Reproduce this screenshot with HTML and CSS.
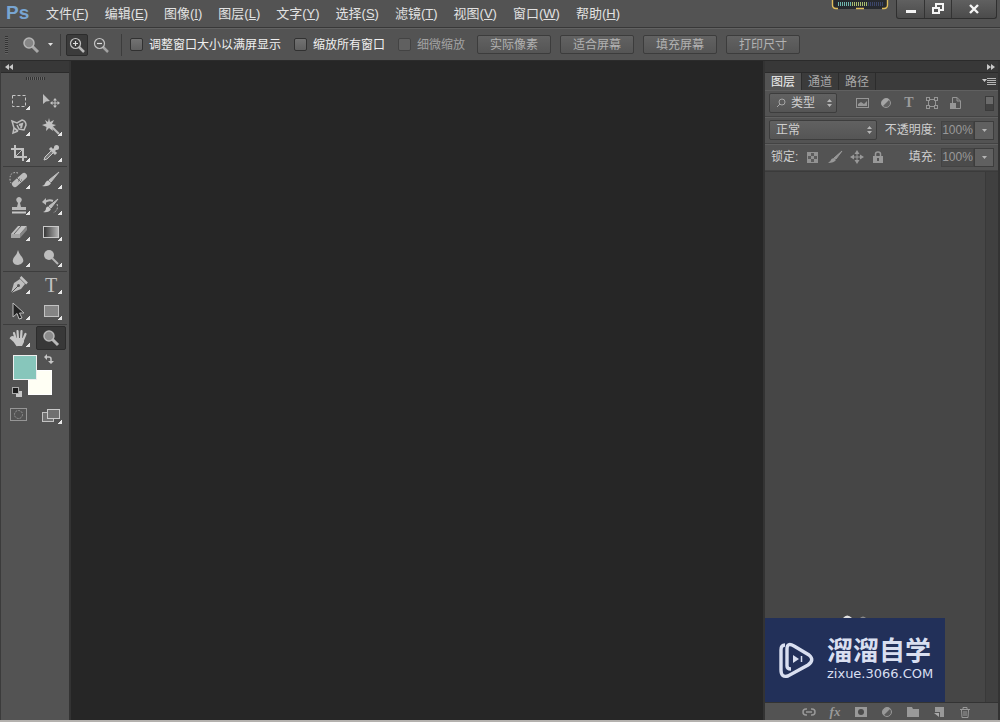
FILE: index.html
```html
<!DOCTYPE html>
<html lang="zh-CN">
<head>
<meta charset="utf-8">
<title>Ps</title>
<link rel="stylesheet" href="styles.css">
</head>
<body>
<header class="menubar">
  <span class="logo">Ps</span>
  <nav class="menus">
    <button>文件(<u>F</u>)</button>
    <button>编辑(<u>E</u>)</button>
    <button>图像(<u>I</u>)</button>
    <button>图层(<u>L</u>)</button>
    <button>文字(<u>Y</u>)</button>
    <button>选择(<u>S</u>)</button>
    <button>滤镜(<u>T</u>)</button>
    <button>视图(<u>V</u>)</button>
    <button>窗口(<u>W</u>)</button>
    <button>帮助(<u>H</u>)</button>
  </nav>
  <svg class="meter" width="58" height="11" viewBox="0 0 58 11" aria-hidden="true">
    <path d="M1 0V6Q1 9 4 9H54Q57 9 57 6V0Z" fill="#26292e"/>
    <path d="M7 4H21" stroke="#6fb5ae" stroke-width="4" stroke-dasharray="1 1"/>
    <path d="M21 4H37" stroke="#a9bd70" stroke-width="4" stroke-dasharray="1 1"/>
    <path d="M37 4H52" stroke="#3c4669" stroke-width="4" stroke-dasharray="1 1"/>
    <path d="M1.500 0V5Q1.500 8.500 5 8.500H7M56.500 0V5Q56.500 8.500 53 8.500H51M25 8.500H33" fill="none" stroke="#e0bd5c" stroke-width="1.400"/>
  </svg>
  <div class="window-controls">
    <button aria-label="最小化"><svg width="12" height="12" viewBox="0 0 12 12"><path d="M1 8.500H11" stroke="#f4f4f4" stroke-width="3"/></svg></button>
    <button aria-label="还原"><svg width="12" height="12" viewBox="0 0 12 12" fill="none" stroke="#f4f4f4" stroke-width="2"><path d="M4 4V1H11V7H8M1 5H7V10H1Z"/></svg></button>
    <button class="close" aria-label="关闭"><svg width="12" height="12" viewBox="0 0 12 12"><path d="M2 2L10 10M10 2L2 10" stroke="#f4f4f4" stroke-width="2.400"/></svg></button>
  </div>
</header>

<section class="options">
  <span class="grip"></span>
  <button class="preset" aria-label="缩放工具">
    <svg width="18" height="18" viewBox="0 0 18 18"><path d="M10 10L16 16" stroke="#a8a8a8" stroke-width="3"/><circle cx="7" cy="7" r="5" fill="#858585" stroke="#b5b5b5" stroke-width="1.500"/></svg>
    <svg width="5" height="3" viewBox="0 0 5 3"><path d="M0 0H5L2.500 3Z" fill="#e2e2e2"/></svg>
  </button>
  <div class="modes">
    <button class="mode on" aria-label="放大"><svg width="16" height="16" viewBox="0 0 16 16" fill="none"><path d="M10 10L15 15" stroke="#b8b8b8" stroke-width="2.500"/><circle cx="6.500" cy="6.500" r="5" stroke="#c2c2c2" stroke-width="1.200"/><path d="M4 6.500H9M6.500 4V9" stroke="#ddd" stroke-width="1.200"/></svg></button>
    <button class="mode" aria-label="缩小"><svg width="16" height="16" viewBox="0 0 16 16" fill="none"><path d="M10 10L15 15" stroke="#a2a2a2" stroke-width="2.500"/><circle cx="6.500" cy="6.500" r="5" stroke="#c2c2c2" stroke-width="1.200"/><path d="M4 6.500H9" stroke="#ddd" stroke-width="1.200"/></svg></button>
  </div>
  <div class="checks">
    <label><input type="checkbox">调整窗口大小以满屏显示</label>
    <label><input type="checkbox">缩放所有窗口</label>
    <label class="dim"><input type="checkbox" disabled>细微缩放</label>
  </div>
  <div class="actions">
    <button>实际像素</button>
    <button>适合屏幕</button>
    <button>填充屏幕</button>
    <button>打印尺寸</button>
  </div>
</section>

<main class="workspace">
  <aside class="toolbox">
    <button class="strip" aria-label="折叠工具栏"><svg width="8" height="6" viewBox="0 0 8 6"><path d="M4 0V6L0 3ZM8 0V6L4 3Z" fill="#c9c9c9"/></svg></button>
    <div class="handle"><span></span></div>
    <div class="tools">
      <button class="tool more" aria-label="选框"><svg width="20" height="20" viewBox="0 0 20 20"><rect x="3.500" y="4.500" width="13" height="11" fill="none" stroke="#c6c6c6" stroke-dasharray="3 2"/></svg></button>
      <button class="tool" aria-label="移动"><svg width="20" height="20" viewBox="0 0 20 20"><path d="M2 3V13L5 10.500L9 10Z" fill="#bcbcbc"/><path d="M10 12H18M14 8V16" stroke="#c2c2c2"/><path d="M14 7L16 9.500H12ZM14 17L16 14.500H12ZM9 12L11.500 10V14ZM19 12L16.500 10V14Z" fill="#c2c2c2"/></svg></button>
      <button class="tool more" aria-label="套索"><svg width="20" height="20" viewBox="0 0 20 20" fill="none" stroke="#bdbdbd" stroke-width="1.500"><path d="M9 14L4 16L5 11L3 4L8 6L13 3Q17 4 17 8L15 13L10 12L8 8"/><path d="M10 8L13 7L12 11M5 11L9 14" stroke-width="2"/></svg></button>
      <button class="tool more" aria-label="魔棒"><svg width="20" height="20" viewBox="0 0 20 20"><path d="M10 9L18 17" stroke="#b9b9b9" stroke-width="2.200"/><path d="M8 1L9 5L13 3L11 7L15 8L11 10L12 14L8 11L5 14L5.500 10L1 8L5.500 6.500L4 3L7 5Z" fill="#c2c2c2"/></svg></button>
      <button class="tool more" aria-label="裁剪"><svg width="20" height="20" viewBox="0 0 20 20" fill="none" stroke="#c2c2c2" stroke-width="2"><path d="M6 2V14H18M2 6H14V18"/><path d="M7 13L15 5" stroke-width="1"/></svg></button>
      <button class="tool more" aria-label="吸管"><svg width="20" height="20" viewBox="0 0 20 20"><path d="M3 17L4 14L11 7L13 9L6 16Z" fill="#777" stroke="#c9c9c9"/><path d="M9 5L15 11M12 8L16 4" stroke="#c2c2c2" stroke-width="3"/><circle cx="15.500" cy="4.500" r="2.500" fill="#c2c2c2"/></svg></button>
    </div>
    <div class="tools">
      <button class="tool more" aria-label="修复画笔"><svg width="20" height="20" viewBox="0 0 20 20"><path d="M9 3Q1 1 1 9Q1 14 5 15" fill="none" stroke="#c6c6c6" stroke-dasharray="1.500 1.500"/><path d="M6 14L15 6" stroke="#bcbcbc" stroke-width="6" stroke-linecap="round"/><path d="M8 8L13 13M10 9H11M12 10H13M9 11H10" stroke="#666"/></svg></button>
      <button class="tool more" aria-label="画笔"><svg width="20" height="20" viewBox="0 0 20 20"><path d="M18 2L10 12L8 10Z" fill="#bdbdbd" stroke="#bdbdbd"/><path d="M7.500 10.500L10 13Q8 17 1 16Q4 15 4.500 12.500Q6 10 7.500 10.500Z" fill="#c9c9c9"/></svg></button>
      <button class="tool more" aria-label="仿制图章"><svg width="20" height="20" viewBox="0 0 20 20"><path d="M3 11H8L9 7Q6 4 8 2Q10 0 12 2Q14 4 11 7L12 11H17V14H3Z" fill="#b9b9b9"/><path d="M3 16.500H17" stroke="#c6c6c6" stroke-width="2"/></svg></button>
      <button class="tool more" aria-label="历史记录画笔"><svg width="20" height="20" viewBox="0 0 20 20"><path d="M17 3L10 12L8 10Z" fill="#bdbdbd" stroke="#bdbdbd"/><path d="M7.500 10.500L10 13Q8 17 2 16Q5 15 5 12Q6 10 7.500 10.500Z" fill="#c9c9c9"/><path d="M4 6Q8 3 12 5" fill="none" stroke="#bdbdbd" stroke-width="2"/><path d="M5 2V9L1 6Z" fill="#bdbdbd"/><path d="M16 8Q18 14 12 17" fill="none" stroke="#bdbdbd" stroke-dasharray="2 1.500"/></svg></button>
      <button class="tool more" aria-label="橡皮擦"><svg width="20" height="20" viewBox="0 0 20 20"><path d="M2 12L9 4H18L11 12Z" fill="#c2c2c2"/><path d="M2 12H11V16H2Z" fill="#a6a6a6"/><path d="M11 12L18 4V8L11 16Z" fill="#858585"/><path d="M5 12L12 4" fill="none" stroke="#626262"/></svg></button>
      <button class="tool more" aria-label="渐变"><svg width="20" height="20" viewBox="0 0 20 20"><defs><linearGradient id="fade"><stop stop-color="#333"/><stop offset="1" stop-color="#b5b5b5"/></linearGradient></defs><rect x="2.500" y="4.500" width="15" height="11" fill="url(#fade)" stroke="#c9c9c9"/></svg></button>
      <button class="tool more" aria-label="模糊"><svg width="20" height="20" viewBox="0 0 20 20"><path d="M9 2Q10 6 13 9Q15 12 14 14Q12 17 9 17Q5 17 4 14Q3 11 6 8Q8 6 9 2Z" fill="#bdbdbd"/></svg></button>
      <button class="tool more" aria-label="减淡"><svg width="20" height="20" viewBox="0 0 20 20"><circle cx="8" cy="7" r="5" fill="#bdbdbd"/><path d="M11 10L17 16" stroke="#b5b5b5" stroke-width="2"/></svg></button>
    </div>
    <div class="tools">
      <button class="tool more" aria-label="钢笔"><svg width="20" height="20" viewBox="0 0 20 20"><path d="M2 18L5 8L11 4L16 9L12 14Z" fill="#bdbdbd"/><path d="M2 18L9 11" stroke="#555"/><circle cx="9.500" cy="10.500" r="1.500" fill="#555"/><path d="M11.500 2L18 8.500" stroke="#c2c2c2" stroke-width="2.500"/></svg></button>
      <button class="tool more type" aria-label="文字">T</button>
      <button class="tool more" aria-label="路径选择"><svg width="20" height="20" viewBox="0 0 20 20"><path d="M4 2V16L8 12.500L10 18L13 17L10.500 12H15Z" fill="#222" stroke="#bdbdbd"/></svg></button>
      <button class="tool more" aria-label="矩形"><svg width="20" height="20" viewBox="0 0 20 20"><rect x="3.500" y="4.500" width="14" height="11" fill="#858585" stroke="#c2c2c2"/></svg></button>
    </div>
    <div class="tools">
      <button class="tool more" aria-label="抓手"><svg width="20" height="20" viewBox="0 0 20 20"><path d="M8 17Q5 12 2 10Q3 8 5 10L7 12M7 12L5 5M9 11L8.500 3M12 11L12.500 3M14 12L16.500 6" fill="none" stroke="#c6c6c6" stroke-width="2.200" stroke-linecap="round"/><path d="M6 10H15V14L13 18H8L5 12Z" fill="#c6c6c6"/></svg></button>
      <button class="tool on" aria-label="缩放"><svg width="20" height="20" viewBox="0 0 20 20"><path d="M11 11L17 17" stroke="#b9b9b9" stroke-width="3"/><circle cx="8" cy="8" r="5" fill="#8b8b8b" stroke="#b9b9b9" stroke-width="1.500"/></svg></button>
    </div>
    <div class="swatches">
      <button class="swatch back" aria-label="背景色"></button>
      <button class="swatch front" aria-label="前景色"></button>
      <button class="swap" aria-label="切换颜色"><svg width="10" height="10" viewBox="0 0 10 10"><path d="M2 3H5Q7 3 7 5V8" fill="none" stroke="#c6c6c6" stroke-width="1.500"/><path d="M3 0V6L0 3ZM4 7H10L7 10Z" fill="#c6c6c6"/></svg></button>
      <button class="reset" aria-label="默认颜色"><svg width="10" height="10" viewBox="0 0 10 10"><rect x="4" y="4" width="6" height="6" fill="#c6c6c6"/><rect x=".5" y=".5" width="6" height="6" fill="#1c1c1c" stroke="#aaa"/></svg></button>
    </div>
    <div class="tools plain">
      <button class="tool" aria-label="快速蒙版"><svg width="20" height="20" viewBox="0 0 20 20" fill="none" stroke="#969696"><rect x="1.500" y="3.500" width="16" height="12"/><circle cx="9.500" cy="9.500" r="4" stroke-dasharray="2 1"/></svg></button>
      <button class="tool more" aria-label="屏幕模式"><svg width="20" height="20" viewBox="0 0 20 20"><rect x="1.500" y="7.500" width="11" height="9" fill="#707070" stroke="#c2c2c2"/><rect x="6.500" y="4.500" width="12" height="9" fill="#707070" stroke="#c9c9c9"/></svg></button>
    </div>
  </aside>

  <div class="canvas"></div>

  <aside class="panel">
    <button class="strip right" aria-label="折叠面板"><svg width="8" height="6" viewBox="0 0 8 6"><path d="M0 0V6L4 3ZM4 0V6L8 3Z" fill="#c9c9c9"/></svg></button>
    <div class="tabs">
      <button class="tab on">图层</button>
      <button class="tab">通道</button>
      <button class="tab">路径</button>
      <button class="panel-menu" aria-label="面板菜单"><svg width="14" height="9" viewBox="0 0 14 9"><path d="M0 2H5L2.500 5Z" fill="#c9c9c9"/><path d="M5 1.500H14M5 3.500H14M5 5.500H14M5 7.500H14" stroke="#b5b5b5"/></svg></button>
    </div>
    <div class="row">
      <div class="picker kind">
        <svg width="10" height="10" viewBox="0 0 10 10" fill="none" stroke="#a5a5a5"><circle cx="6" cy="4" r="3"/><path d="M4 6L1 9"/></svg>
        <select aria-label="筛选类型"><option>类型</option></select>
        <svg width="5" height="8" viewBox="0 0 5 8"><path d="M0 3H5L2.500 0ZM0 5H5L2.500 8Z" fill="#b5b5b5"/></svg>
      </div>
      <div class="filters">
        <button aria-label="像素图层"><svg width="14" height="14" viewBox="0 0 14 14"><rect x=".5" y="2.500" width="12" height="9" fill="none" stroke="#969696"/><path d="M2 10V8L5 6L8 8L11 5V10Z" fill="#969696"/></svg></button>
        <button aria-label="调整图层"><svg width="14" height="14" viewBox="0 0 14 14"><circle cx="7" cy="7" r="4.500" fill="#626262" stroke="#969696"/><path d="M10.500 3.500L3.500 10.500A5 5 0 0 1 10.500 3.500Z" fill="#a5a5a5"/></svg></button>
        <button class="serif" aria-label="文字图层">T</button>
        <button aria-label="形状图层"><svg width="14" height="14" viewBox="0 0 14 14"><rect x="3.500" y="3.500" width="7" height="7" fill="none" stroke="#969696"/><path d="M1 1H5V5H1ZM9 1H13V5H9ZM1 9H5V13H1ZM9 9H13V13H9Z" fill="#969696"/><path d="M2 2H4V4H2ZM10 2H12V4H10ZM2 10H4V12H2ZM10 10H12V12H10Z" fill="#535353"/></svg></button>
        <button aria-label="智能对象"><svg width="14" height="14" viewBox="0 0 14 14"><path d="M4.500 7V1.500H9L12.500 5V12.500H8M9 1.500V5H12.500" fill="none" stroke="#969696"/><rect x="2" y="7" width="6" height="6" fill="#969696"/></svg></button>
      </div>
      <button class="toggle" aria-label="图层过滤开关"></button>
    </div>
    <div class="row">
      <div class="picker blend">
        <select aria-label="混合模式"><option>正常</option></select>
        <svg width="5" height="8" viewBox="0 0 5 8"><path d="M0 3H5L2.500 0ZM0 5H5L2.500 8Z" fill="#b5b5b5"/></svg>
      </div>
      <div class="amount"><label for="opacity">不透明度:</label><input id="opacity" type="text" value="100%"><button aria-label="不透明度选项"><svg width="5" height="3" viewBox="0 0 5 3"><path d="M0 0H5L2.500 3Z" fill="#b5b5b5"/></svg></button></div>
    </div>
    <div class="row">
      <span class="lock-label">锁定:</span>
      <div class="locks">
        <button aria-label="锁定透明像素"><svg width="14" height="14" viewBox="0 0 14 14"><rect x="1" y="2" width="11" height="11" fill="#929292"/><path d="M5 3H8V6H5ZM2 6H5V9H2ZM8 6H11V9H8ZM5 9H8V12H5Z" fill="#5c5c5c"/></svg></button>
        <button aria-label="锁定图像像素"><svg width="16" height="14" viewBox="0 0 16 14"><path d="M15 1L9 9L7 8Z" fill="#999" stroke="#999"/><path d="M6.500 8L9 10Q7 13 1 13Q4 11 4.500 9Z" fill="#999"/></svg></button>
        <button aria-label="锁定位置"><svg width="14" height="14" viewBox="0 0 14 14"><path d="M3 7H11M7 3V11" stroke="#999"/><path d="M7 0L9.500 4H4.500ZM7 14L9.500 10H4.500ZM0 7L4 4.500V9.500ZM14 7L10 4.500V9.500Z" fill="#999"/></svg></button>
        <button aria-label="锁定全部"><svg width="14" height="14" viewBox="0 0 14 14"><path d="M4.500 7V4Q4.500 2 7 2Q9.500 2 9.500 4V7" fill="none" stroke="#999" stroke-width="1.500"/><path d="M2 6H12V13H2ZM6 8V11H8V8Z" fill="#999" fill-rule="evenodd"/></svg></button>
      </div>
      <div class="amount"><label for="fill">填充:</label><input id="fill" type="text" value="100%"><button aria-label="填充选项"><svg width="5" height="3" viewBox="0 0 5 3"><path d="M0 0H5L2.500 3Z" fill="#b5b5b5"/></svg></button></div>
    </div>
    <div class="layers">
      <div class="track"></div>
      <div class="brand-area">
        <svg class="bubbles" width="28" height="3" viewBox="0 0 28 3"><path d="M0 3Q4 -2 9 3Z" fill="#e2e2e2"/><path d="M17 3Q20 0 23 3Z" fill="#8b8b8b"/></svg>
        <div class="brand">
          <svg width="36" height="38" viewBox="0 0 36 38" fill="none" stroke="#d9dff0" stroke-width="3.400"><path d="M6 4Q2 4 2 9V29Q2 37 9 35L29 24Q36 19 30 14L15 5Q8 1 8 8V25Q8 28 12 28"/><path d="M14 14V22L20 18Z" fill="#d9dff0" stroke="none"/><path d="M22.500 15V21" stroke-width="1.500"/></svg>
          <div class="brand-text"><strong>溜溜自学</strong><span>zixue.3066.COM</span></div>
        </div>
      </div>
    </div>
    <div class="footer">
      <button aria-label="链接图层"><svg width="14" height="12" viewBox="0 0 14 12" fill="none" stroke="#999" stroke-width="1.500"><path d="M5 9H4Q1 9 1 6Q1 3 4 3H5M9 3H10Q13 3 13 6Q13 9 10 9H9M4 6H10"/></svg></button>
      <button class="fx" aria-label="图层样式">fx</button>
      <button aria-label="添加蒙版"><svg width="14" height="12" viewBox="0 0 14 12"><rect x="1" y="1" width="12" height="10" fill="#999"/><circle cx="7" cy="6" r="3" fill="#4c4c4c"/></svg></button>
      <button aria-label="新建调整图层"><svg width="14" height="12" viewBox="0 0 14 12"><circle cx="7" cy="6" r="4.500" fill="#5b5b5b" stroke="#999"/><path d="M10.500 2.500L3.500 9.500A5 5 0 0 1 10.500 2.500Z" fill="#999"/></svg></button>
      <button aria-label="新建组"><svg width="14" height="12" viewBox="0 0 14 12"><path d="M1 1H6L7 3H13V11H1Z" fill="#999"/></svg></button>
      <button aria-label="新建图层"><svg width="14" height="12" viewBox="0 0 14 12"><path d="M3 1H12V11H8V6H3Z" fill="#999"/><path d="M2 7H7V11Z" fill="#aaa"/></svg></button>
      <button aria-label="删除图层"><svg width="14" height="12" viewBox="0 0 14 12" fill="none" stroke="#999"><path d="M2 3.500H12M5 3V1.500H9V3M3.500 4L4 11.500H10L10.500 4M6 5V10M8 5V10"/></svg></button>
    </div>
  </aside>
</main>
</body>
</html>
```
FILE: styles.css
```css
* {
  box-sizing: border-box;
}

body {
  display: flex;
  flex-direction: column;
  height: 100vh;
  margin: 0;
  overflow: hidden;
  border-bottom: 2px solid #b4b1ae;
  background: #535353;
  color: #e2e2e2;
  font: 12px/16px "Liberation Sans", "Noto Sans CJK SC", sans-serif;
}

button,
input,
select {
  margin: 0;
  padding: 0;
  border: 0;
  border-radius: 0;
  background: none;
  color: inherit;
  font: inherit;
}

svg {
  display: block;
  flex: none;
}

/* Menu bar */
.menubar {
  position: relative;
  display: flex;
  flex: none;
  height: 28px;
  padding: 0 3px 0 6px;
  border-bottom: 1px solid #383838;
}

.logo {
  width: 40px;
  color: #78a5d2;
  font-size: 19px;
  font-weight: bold;
  line-height: 25px;
}

.menus {
  display: flex;
  flex: 1;
  gap: 16px;
  font-size: 13px;
}

.menus button {
  white-space: nowrap;
}

.meter {
  position: absolute;
  top: 0;
  right: 111px;
}

.window-controls {
  display: flex;
  height: 19px;
  border: 1px solid #2f2f2f;
  border-top: 0;
  border-radius: 0 0 3px 3px;
  background: linear-gradient(#606060, #4b4b4b);
}

.window-controls button {
  display: flex;
  align-items: center;
  justify-content: center;
  width: 27px;
}

.window-controls button + button {
  border-left: 1px solid #333;
}

.window-controls .close {
  width: 45px;
}

/* Tool options */
.options {
  display: flex;
  flex: none;
  align-items: center;
  height: 33px;
  padding-left: 5px;
  border-top: 1px solid #626262;
  border-bottom: 1px solid #2b2b2b;
}

.grip {
  width: 3px;
  height: 18px;
  margin-right: 14px;
  background: repeating-linear-gradient(#333 0 1px, #626262 1px 2px);
}

.preset {
  display: flex;
  align-items: center;
  gap: 8px;
  width: 39px;
  height: 22px;
  border-right: 1px solid #3c3c3c;
}

.modes {
  display: flex;
  gap: 2px;
  width: 61px;
  margin-right: 8px;
  padding-left: 5px;
  border-right: 1px solid #3c3c3c;
}

.mode {
  display: flex;
  align-items: center;
  justify-content: center;
  width: 22px;
  height: 22px;
}

.mode.on {
  border: 1px solid #2c2c2c;
  border-radius: 2px;
  background: #3b3b3b;
}

.checks {
  display: flex;
  gap: 13px;
  margin-right: 12px;
}

.checks label {
  display: flex;
  align-items: center;
  gap: 6px;
  color: #f0f0f0;
  white-space: nowrap;
}

.checks input {
  appearance: none;
  width: 13px;
  height: 13px;
  border: 1px solid #313131;
  border-radius: 2px;
  background: linear-gradient(#727272, #606060);
}

.checks .dim {
  color: #a2a2a2;
}

.checks .dim input {
  border-color: #434343;
  background: #606060;
}

.actions {
  display: flex;
  gap: 9px;
}

.actions button {
  width: 74px;
  height: 19px;
  border: 1px solid #3c3c3c;
  border-radius: 2px;
  background: linear-gradient(#626262, #555);
  color: #b2b2b2;
  line-height: 16px;
}

/* Work area */
.workspace {
  display: flex;
  flex: 1;
  min-height: 0;
}

.canvas {
  flex: 1;
  background: #262626;
}

.strip {
  display: flex;
  flex: none;
  align-items: center;
  width: 100%;
  height: 12px;
  padding: 0 4px;
  border-bottom: 1px solid #2b2b2b;
  background: #383838;
}

.strip.right {
  justify-content: flex-end;
  padding: 0 3px;
}

/* Toolbox */
.toolbox {
  width: 71px;
  border-right: 2px solid #333;
  border-left: 1px solid #3b3b3b;
}

.handle {
  display: flex;
  justify-content: center;
  height: 15px;
  padding-top: 4px;
}

.handle span {
  width: 19px;
  height: 3px;
  background: repeating-linear-gradient(90deg, #333 0 1px, #666 1px 2px);
}

.tools {
  display: grid;
  grid-template-columns: 32px 32px;
  margin: 0 2px;
  border-bottom: 1px solid #3d3d3d;
}

.tools.plain,
.tools:has(.on) {
  border-bottom: 0;
}

.tool {
  position: relative;
  display: flex;
  align-items: center;
  justify-content: center;
  height: 26px;
}

.tool.more::after {
  position: absolute;
  right: 5px;
  bottom: 4px;
  width: 4px;
  height: 4px;
  background: linear-gradient(135deg, transparent 50%, #e6e6e6 50%);
  content: "";
}

.tool.on {
  height: 24px;
  margin: 1px;
  border: 1px solid #2c2c2c;
  border-radius: 2px;
  background: #383838;
}

.tool.type {
  color: #c2c2c2;
  font: 20px/24px "Liberation Serif", serif;
}

.swatches {
  position: relative;
  height: 51px;
}

.swatch {
  position: absolute;
  width: 24px;
  height: 25px;
}

.swatch.front {
  top: 4px;
  left: 12px;
  border: 1px solid #eee;
  background: #87c6bb;
}

.swatch.back {
  top: 19px;
  left: 27px;
  border: 1px solid #fff;
  background: #fffff4;
}

.swap {
  position: absolute;
  top: 3px;
  left: 43px;
}

.reset {
  position: absolute;
  top: 36px;
  left: 11px;
}

/* Layers panel */
.panel {
  display: flex;
  flex-direction: column;
  width: 237px;
  border-right: 2px solid #333;
  border-left: 2px solid #333;
}

.tabs {
  display: flex;
  flex: none;
  height: 17px;
  background: #3b3b3b;
}

.tab {
  width: 37px;
  border-right: 1px solid #2c2c2c;
  color: #a8a8a8;
}

.tab.on {
  background: #535353;
  color: #f0f0f0;
}

.panel-menu {
  margin: 0 2px 0 auto;
}

.row {
  display: flex;
  flex: none;
  align-items: center;
  height: 27px;
  padding: 0 4px;
  border-bottom: 1px solid #434343;
  box-shadow: inset 0 1px #606060;
}

.picker {
  display: flex;
  align-items: center;
  height: 20px;
  padding: 0 4px 0 6px;
  border: 1px solid #3d3d3d;
  border-radius: 2px;
  background: linear-gradient(#616161, #555);
}

.picker select {
  appearance: none;
  flex: 1;
  min-width: 0;
  height: 18px;
  color: #cfcfcf;
}

.kind {
  gap: 5px;
  width: 68px;
}

.blend {
  width: 108px;
}

.filters {
  display: flex;
  gap: 9px;
  margin-left: 19px;
}

.serif {
  width: 14px;
  color: #9b9b9b;
  font: bold 14px/14px "Liberation Serif", serif;
}

.toggle {
  width: 9px;
  height: 15px;
  margin-left: auto;
  border: 1px solid #3b3b3b;
  background: linear-gradient(#6b6b6b 50%, #424242 50%);
}

.amount {
  display: flex;
  align-items: center;
  margin-left: auto;
  color: #cfcfcf;
}

.amount label {
  margin-right: 5px;
}

.amount input {
  width: 33px;
  height: 19px;
  border: 1px solid #434343;
  background: #4b4b4b;
  color: #999;
  text-align: center;
}

.amount button {
  display: flex;
  align-items: center;
  justify-content: center;
  width: 20px;
  height: 19px;
  border: 1px solid #3d3d3d;
  background: #606060;
}

.lock-label {
  margin-right: 8px;
  padding-left: 2px;
  color: #cfcfcf;
}

.locks {
  display: flex;
  gap: 7px;
}

.layers {
  position: relative;
  display: flex;
  flex: 1;
  justify-content: flex-end;
  min-height: 0;
  border-top: 1px solid #3b3b3b;
  background: #464646;
}

.track {
  width: 13px;
  border-left: 1px solid #393939;
  background: #404040;
}

.brand-area {
  position: absolute;
  bottom: 0;
  left: 0;
}

.bubbles {
  margin-left: 78px;
}

.brand {
  display: flex;
  align-items: center;
  gap: 12px;
  width: 180px;
  height: 84px;
  padding-left: 14px;
  background: #223059;
  color: #d9dff0;
}

.brand-text {
  display: flex;
  flex-direction: column;
  padding-bottom: 2px;
}

.brand strong {
  font-size: 26px;
  line-height: 30px;
}

.brand span {
  font: 13px/16px "DejaVu Sans", sans-serif;
}

.footer {
  display: flex;
  flex: none;
  align-items: center;
  gap: 12px;
  justify-content: flex-end;
  height: 18px;
  padding-right: 26px;
  border-top: 1px solid #333;
}

.fx {
  width: 14px;
  color: #999;
  font: italic bold 13px/14px "Liberation Serif", serif;
}
```
